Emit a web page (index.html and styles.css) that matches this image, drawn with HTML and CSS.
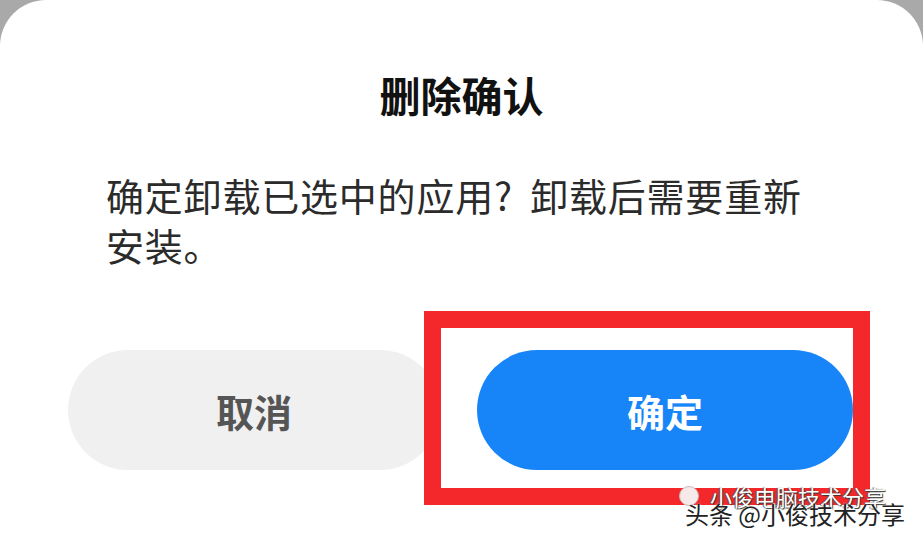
FILE: index.html
```html
<!DOCTYPE html>
<html lang="zh-CN">
<head>
    <meta charset="UTF-8">
    <meta name="viewport" content="width=device-width, initial-scale=1.0">
    <title>删除确认</title>
    <link rel="stylesheet" href="styles.css">
</head>
<body>
  <div class="sheet">
      <h1 class="title">删除确认</h1>
      <p class="message">确定卸载已选中的应用? 卸载后需要重新安装。</p>
      <div class="actions">
          <button class="btn btn-cancel">取消</button>
          <div class="mark">
              <button class="btn btn-ok">确定</button>
          </div>
      </div>
  </div>
  <div class="watermark">
      <div class="wm-line wm-top">
          <span class="wm-icon"></span>小俊电脑技术分享
      </div>
      <div class="wm-line wm-bottom">头条 @小俊技术分享</div>
  </div>
</body>
</html>
```

FILE: styles.css
```css
      body {
          margin: 0;
          width: 923px;
          height: 538px;
          overflow: hidden;
          position: relative;
          background: #a9a9a9;
          font-family: "Noto Sans CJK SC", "Noto Sans", sans-serif;
      }

      .sheet {
          height: 100%;
          box-sizing: border-box;
          background: #fff;
          border-radius: 46px 46px 0 0;
          padding-top: 70px;
      }

      .title {
          margin: 0;
          font-size: 41px;
          line-height: 48px;
          font-weight: 700;
          text-align: center;
          color: #111;
      }

      .message {
          margin: 52px 0 0;
          padding: 0 112px 0 106px;
          font-size: 38px;
          line-height: 50px;
          letter-spacing: 0.8px;
          word-spacing: 8px;
          color: #2b2b2b;
      }

      .actions {
          display: flex;
          gap: 37px;
          margin-top: 80px;
          padding-left: 68px;
      }

      .btn {
          display: block;
          height: 120px;
          border: none;
          border-radius: 60px;
          font-family: inherit;
          font-size: 38px;
          font-weight: 700;
          cursor: pointer;
      }

      .btn-cancel {
          width: 372px;
          flex: none;
          background: #f0f0f0;
          color: #555;
      }

      .mark {
          width: 376px;
          flex: none;
          position: relative;
      }

      .btn-ok {
          width: 100%;
          background: #1785f8;
          color: #fff;
      }

      /* red annotation frame round the confirm button */
      .mark::after {
          content: "";
          position: absolute;
          top: -39px;
          left: -53px;
          right: -17px;
          bottom: -35px;
          border: 17px solid #f4282a;
          pointer-events: none;
      }

      .watermark {
          position: absolute;
          right: 18px;
          bottom: 12px;
      }

      .wm-line {
          white-space: nowrap;
          line-height: 1;
      }

      .wm-top {
          display: flex;
          align-items: center;
          gap: 11px;
          margin: 0 10px 0 -6px;
          font-size: 22px;
          color: #fff;
          text-shadow: 1px 1px 1px #333, -1px 0 1px #555;
      }

      .wm-icon {
          width: 18px;
          height: 18px;
          border-radius: 50%;
          background: #f6e9ea;
          border: 1px solid #c9b7b8;
      }

      .wm-bottom {
          margin-top: -5px;
          font-size: 24px;
          color: #222;
          text-shadow: 0 0 2px #fff, 1px 1px 0 #fff;
      }
```
